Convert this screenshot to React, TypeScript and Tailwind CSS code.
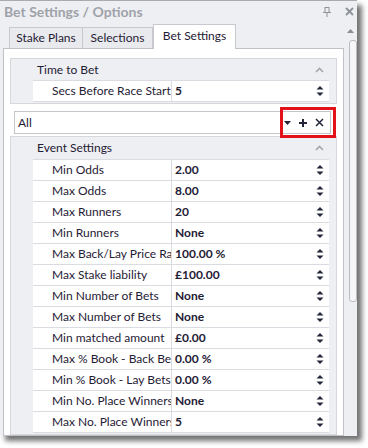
import React from 'react';

const font = { fontFamily: 'Lato, "Noto Sans", sans-serif' };

const eventRows: [string, string][] = [
  ['Min Odds', '2.00'],
  ['Max Odds', '8.00'],
  ['Max Runners', '20'],
  ['Min Runners', 'None'],
  ['Max Back/Lay Price Ratio', '100.00 %'],
  ['Max Stake liability', '£100.00'],
  ['Min Number of Bets', 'None'],
  ['Max Number of Bets', 'None'],
  ['Min matched amount', '£0.00'],
  ['Max % Book - Back Bets', '0.00 %'],
  ['Min % Book - Lay Bets', '0.00 %'],
  ['Min No. Place Winners', 'None'],
  ['Max No. Place Winners', '5'],
];

function Spinner() {
  return (
    <svg width="8" height="12" viewBox="0 0 8 12" className="shrink-0">
      <path d="M0.5 4.5 L4 1 L7.5 4.5 Z" fill="#23263a" />
      <path d="M0.5 7.5 L4 11 L7.5 7.5 Z" fill="#23263a" />
    </svg>
  );
}

function Chevron() {
  return (
    <svg width="9" height="6" viewBox="0 0 9 6" className="shrink-0">
      <path d="M1 5 L4.5 1.5 L8 5" fill="none" stroke="#a3a7af" strokeWidth="1.6" />
    </svg>
  );
}

function Row({ label, value }: { label: string; value: string }) {
  return (
    <div className="flex h-[21px] border-t border-[#dadce1] bg-white">
      <div className="w-[139px] shrink-0 overflow-hidden whitespace-nowrap border-r border-[#dadce1] pl-[19px] leading-[20px]">
        {label}
      </div>
      <div className="flex flex-1 items-center justify-between pl-[3px] pr-[5px]">
        <span className="font-bold">{value}</span>
        <Spinner />
      </div>
    </div>
  );
}

function Category({ title, rows, headerH }: { title: string; rows: [string, string][]; headerH: string }) {
  return (
    <div className="mx-[6px] border border-[#d6d8dd] bg-[#eeeff2] pb-[1px]">
      <div className={`flex ${headerH} items-center justify-between pl-[26px] pr-[12px]`}>
        <span>{title}</span>
        <Chevron />
      </div>
      <div className="ml-[22px] mr-[7px] border-b border-[#dadce1]">
        {rows.map(([l, v]) => (
          <Row key={l} label={l} value={v} />
        ))}
      </div>
    </div>
  );
}

export default function App() {
  return (
    <div className="relative h-[448px] w-[368px] bg-white text-[12px] text-[#1f2035]" style={font}>
      <div className="flex h-[436px] w-[357px] flex-col border-t border-[#a9abb0] bg-[#eeeff2] shadow-[5px_5px_5px_rgba(0,0,0,0.55)]">
        {/* title bar */}
        <div className="flex h-[21px] shrink-0 items-center justify-between pl-[4px] pr-[3px]">
          <span className="text-[14px] font-bold text-[#9ea2aa]">Bet Settings / Options</span>
          <div className="flex items-center gap-[14px]">
            <svg width="8" height="10" viewBox="0 0 8 10">
              <rect x="2" y="0.5" width="4" height="5" fill="none" stroke="#8d9199" />
              <rect x="0" y="5" width="8" height="1" fill="#8d9199" />
              <rect x="3.5" y="6" width="1" height="4" fill="#8d9199" />
            </svg>
            <svg width="9" height="9" viewBox="0 0 9 9">
              <path d="M1 1 L8 8 M8 1 L1 8" stroke="#8d9199" strokeWidth="1.8" />
            </svg>
          </div>
        </div>

        <div className="flex flex-1">
          <div className="flex w-[344px] flex-col">
            {/* tabs */}
            <div className="flex h-[26px] shrink-0 items-end pl-[9px]">
              <div className="flex h-[21px] w-[74px] items-center justify-center border border-b-0 border-[#c7c9ce] bg-[#e9eaee]">
                Stake Plans
              </div>
              <div className="flex h-[21px] w-[70px] items-center justify-center border border-b-0 border-l-0 border-[#c7c9ce] bg-[#e9eaee]">
                Selections
              </div>
              <div className="relative z-10 -mb-[1px] flex h-[25px] w-[83px] items-center justify-center border border-b-0 border-[#c7c9ce] bg-white pb-[2px]">
                Bet Settings
              </div>
            </div>

            {/* content panel */}
            <div className="ml-[3px] flex w-[341px] flex-1 flex-col border border-[#bfc1c7] bg-white pt-[9px]">
              <Category title="Time to Bet" rows={[['Secs Before Race Start', '5']]} headerH="h-[21px]" />

              <div className="ml-[10px] mr-[12px] mt-[7px] flex h-[23px] items-center justify-between border border-[#c3c5ca] bg-white pl-[3px] pr-[6px]">
                <span>All</span>
                <div className="flex items-center gap-[8px]">
                  <svg width="7" height="4" viewBox="0 0 7 4">
                    <path d="M0 0 L7 0 L3.5 4 Z" fill="#22253a" />
                  </svg>
                  <svg width="8" height="8" viewBox="0 0 8 8">
                    <path d="M4 0 V8 M0 4 H8" stroke="#22253a" strokeWidth="2" />
                  </svg>
                  <svg width="9" height="9" viewBox="0 0 9 9">
                    <path d="M1 1 L8 8 M8 1 L1 8" stroke="#22253a" strokeWidth="1.5" />
                  </svg>
                </div>
              </div>

              <div className="mt-[2px]">
                <Category title="Event Settings" rows={eventRows} headerH="h-[22px]" />
              </div>
            </div>
          </div>

          {/* scrollbar */}
          <div className="flex w-[13px] flex-col items-center">
            <svg width="7" height="4" viewBox="0 0 7 4" className="mt-[7px]">
              <path d="M0 4 L3.5 0 L7 4 Z" fill="#8a8d94" />
            </svg>
            <div className="ml-[5px] mt-[7px] h-[262px] w-[8px] rounded-[3px] border border-[#b9bbc0] bg-[#f6f6f8]" />
          </div>
        </div>
      </div>

      {/* highlight annotation */}
      <div className="absolute left-[280px] top-[107px] h-[31px] w-[56px] border-[3px] border-[#e3121a]" />
    </div>
  );
}
